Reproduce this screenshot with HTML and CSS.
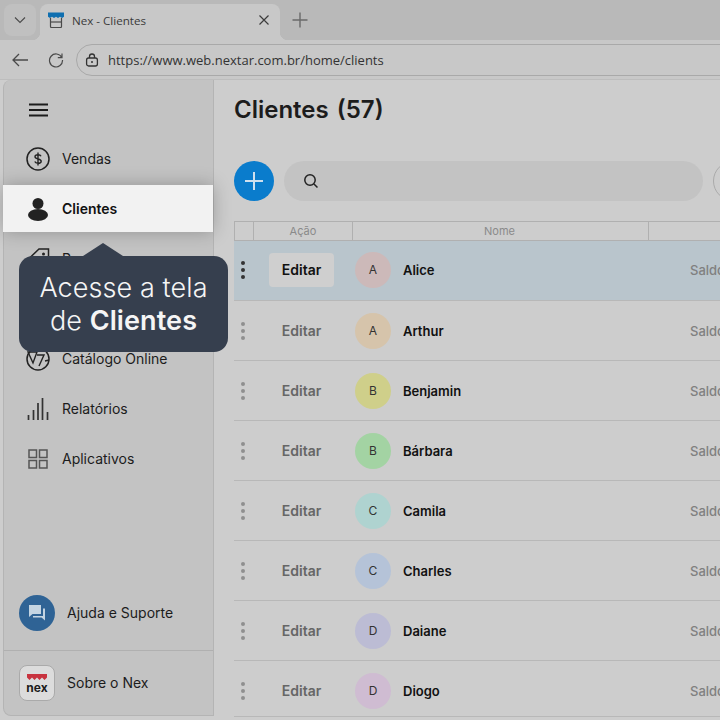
FILE: index.html
```html
<!DOCTYPE html>
<html lang="en">
<head>
    <meta charset="UTF-8">
    <title>Nex - Clientes</title>
    <link rel="stylesheet" href="styles.css">
</head>
<body>
    <div class="tabstrip">
        <div class="tab-list-button">
            <svg width="14" height="14" viewBox="0 0 14 14"><path d="M2 4.500l5 5 5-5" fill="none" stroke="#4a4a4a" stroke-width="1.100"/></svg>
        </div>
        <div class="tab">
            <svg class="favicon" width="16" height="16" viewBox="0 0 16 16">
                <path d="M2.500 6v8.500a1 1 0 0 0 1 1h9a1 1 0 0 0 1-1V6" fill="none" stroke="#4a4a4a" stroke-width="1.200"/>
                <path d="M3 10h10" stroke="#4a4a4a" stroke-width="1.200"/>
                <path d="M0 0.500h16v4.200l-2 1.300-2-1.300-2 1.300-2-1.300-2 1.300-2-1.300-2 1.300-2-1.300z" fill="#0f6fb0"/>
            </svg>
            <span class="tab-title">Nex - Clientes</span>
            <svg class="tab-close" width="12" height="12" viewBox="0 0 12 12"><path d="M1.500 1.500l9 9M10.500 1.500l-9 9" stroke="#3c3c3c" stroke-width="1.200"/></svg>
        </div>
        <svg class="new-tab" width="16" height="16" viewBox="0 0 16 16"><path d="M8 0.500v15M0.500 8h15" stroke="#6a6a6a" stroke-width="1.400"/></svg>
    </div>

    <div class="toolbar">
        <svg width="18" height="16" viewBox="0 0 18 16"><path d="M17 8H2M8 2L2 8l6 6" fill="none" stroke="#4a4a4a" stroke-width="1.300"/></svg>
        <svg width="16" height="16" viewBox="0 0 16 16"><path d="M13.800 5.500A6.500 6.500 0 1 0 14.500 8M14 1.500v4.200H9.800" fill="none" stroke="#4a4a4a" stroke-width="1.200"/></svg>
        <div class="address">
            <svg width="14" height="14" viewBox="0 0 14 14"><rect x="1.600" y="5" width="10.800" height="8" rx="2" fill="none" stroke="#333" stroke-width="1.300"/><path d="M4.500 5V3.500a2.500 2.500 0 0 1 5 0V5" fill="none" stroke="#333" stroke-width="1.300"/><circle cx="7" cy="9" r="1" fill="#333"/></svg>
            <span class="url">https://www.web.nextar.com.br/home/clients</span>
        </div>
    </div>

    <div class="app">
        <aside class="sidebar">
            <div class="menu-button">
                <svg width="20" height="14" viewBox="0 0 20 14"><path d="M0 1.500h19M0 7h19M0 12.500h19" stroke="#1c1c1c" stroke-width="2"/></svg>
            </div>
            <nav class="nav">
                <a class="nav-item">
                    <svg class="nav-icon" width="24" height="24" viewBox="0 0 24 24"><circle cx="12" cy="12" r="11" fill="none" stroke="#222" stroke-width="1.500"/><path d="M15 9.300c-.4-1-1.500-1.600-3-1.600-1.700 0-3 .8-3 2.100 0 2.800 6.200 1.500 6.200 4.400 0 1.400-1.400 2.100-3.200 2.100-1.600 0-2.800-.6-3.200-1.700M12 5.500v13" fill="none" stroke="#222" stroke-width="1.400"/></svg>
                    <span>Vendas</span>
                </a>
                <a class="nav-item active">
                    <svg class="nav-icon" width="24" height="24" viewBox="0 0 24 24"><circle cx="12" cy="6.500" r="5.500" fill="#222"/><ellipse cx="12" cy="18" rx="10" ry="6" fill="#222"/></svg>
                    <span>Clientes</span>
                </a>
                <a class="nav-item">
                    <svg class="nav-icon" width="24" height="24" viewBox="0 0 24 24"><path d="M1.500 13L13 2h9.500v9.500L11 23z" fill="none" stroke="#222" stroke-width="1.500"/><circle cx="17.500" cy="7" r="1.500" fill="#222"/></svg>
                    <span>Produtos</span>
                </a>
                <a class="nav-item">
                    <svg class="nav-icon" width="24" height="24" viewBox="0 0 24 24"><rect x="2" y="6" width="20" height="16" fill="none" stroke="#222" stroke-width="1.500"/></svg>
                    <span>Estoque</span>
                </a>
                <a class="nav-item">
                    <svg class="nav-icon" width="24" height="24" viewBox="0 0 24 24"><circle cx="12" cy="12" r="11" fill="none" stroke="#222" stroke-width="1.500"/><path d="M2 5h9L7 16zM11 8h7l-5 11M19 14l4-1" fill="none" stroke="#222" stroke-width="1.400"/></svg>
                    <span>Catálogo Online</span>
                </a>
                <a class="nav-item">
                    <svg class="nav-icon" width="24" height="24" viewBox="0 0 24 24"><path d="M2.500 23v-5M7.500 23V13M12 23V6M16.500 23V1M21.500 23v-8" fill="none" stroke="#333" stroke-width="1.700"/></svg>
                    <span>Relatórios</span>
                </a>
                <a class="nav-item">
                    <svg class="nav-icon" width="24" height="24" viewBox="0 0 24 24"><path d="M3 3h7.500v7.500H3zM13.500 3H21v7.500h-7.500zM3 13.500h7.500V21H3zM13.500 13.500H21V21h-7.500z" fill="none" stroke="#555" stroke-width="1.500"/></svg>
                    <span>Aplicativos</span>
                </a>
            </nav>
            <div class="help">
                <div class="help-icon">
                    <svg width="20" height="20" viewBox="0 0 20 20"><path d="M2 2h12v9H5.500L2 14z" fill="#c4d4e2"/><path d="M16 5.500h2v12l-3.500-3H6V13h10z" fill="#c4d4e2"/></svg>
                </div>
                <span>Ajuda e Suporte</span>
            </div>
            <div class="about">
                <div class="about-logo">
                    <svg width="20" height="7" viewBox="0 0 20 7"><path d="M0 0h20v3.500l-2.500 2.500-2.500-2.500-2.500 2.500-2.500-2.500-2.500 2.500L5 3.500 2.500 6 0 3.500z" fill="#c8333f"/></svg>
                    <span class="logo-text">nex</span>
                </div>
                <span class="about-label">Sobre o Nex</span>
            </div>
        </aside>

        <main class="main">
            <h1 class="page-title">Clientes (57)</h1>
            <div class="actions">
                <button class="add-button">
                    <svg width="20" height="20" viewBox="0 0 20 20"><path d="M10 1v18M1 10h18" stroke="#cfe0ee" stroke-width="2"/></svg>
                </button>
                <div class="search">
                    <svg width="16" height="16" viewBox="0 0 16 16"><circle cx="7" cy="7" r="5.200" fill="none" stroke="#222" stroke-width="1.500"/><path d="M11 11l3.500 3.500" stroke="#222" stroke-width="1.500"/></svg>
                </div>
                <div class="filter-button"></div>
            </div>

            <div class="table">
                <div class="table-head">
                    <div class="col-menu"></div>
                    <div class="col-action">Ação</div>
                    <div class="col-name">Nome</div>
                    <div class="col-debit">Débito</div>
                </div>
                <div class="row selected">
                    <div class="col-menu"><i></i><i></i><i></i></div>
                    <div class="col-action"><span class="edit">Editar</span></div>
                    <div class="col-name"><span class="avatar a1">A</span><b>Alice</b></div>
                    <div class="col-debit">Saldo</div>
                </div>
                <div class="row">
                    <div class="col-menu"><i></i><i></i><i></i></div>
                    <div class="col-action"><span class="edit">Editar</span></div>
                    <div class="col-name"><span class="avatar a2">A</span><b>Arthur</b></div>
                    <div class="col-debit">Saldo</div>
                </div>
                <div class="row">
                    <div class="col-menu"><i></i><i></i><i></i></div>
                    <div class="col-action"><span class="edit">Editar</span></div>
                    <div class="col-name"><span class="avatar a3">B</span><b>Benjamin</b></div>
                    <div class="col-debit">Saldo</div>
                </div>
                <div class="row">
                    <div class="col-menu"><i></i><i></i><i></i></div>
                    <div class="col-action"><span class="edit">Editar</span></div>
                    <div class="col-name"><span class="avatar a4">B</span><b>Bárbara</b></div>
                    <div class="col-debit">Saldo</div>
                </div>
                <div class="row">
                    <div class="col-menu"><i></i><i></i><i></i></div>
                    <div class="col-action"><span class="edit">Editar</span></div>
                    <div class="col-name"><span class="avatar a5">C</span><b>Camila</b></div>
                    <div class="col-debit">Saldo</div>
                </div>
                <div class="row">
                    <div class="col-menu"><i></i><i></i><i></i></div>
                    <div class="col-action"><span class="edit">Editar</span></div>
                    <div class="col-name"><span class="avatar a6">C</span><b>Charles</b></div>
                    <div class="col-debit">Saldo</div>
                </div>
                <div class="row">
                    <div class="col-menu"><i></i><i></i><i></i></div>
                    <div class="col-action"><span class="edit">Editar</span></div>
                    <div class="col-name"><span class="avatar a7">D</span><b>Daiane</b></div>
                    <div class="col-debit">Saldo</div>
                </div>
                <div class="row">
                    <div class="col-menu"><i></i><i></i><i></i></div>
                    <div class="col-action"><span class="edit">Editar</span></div>
                    <div class="col-name"><span class="avatar a8">D</span><b>Diogo</b></div>
                    <div class="col-debit">Saldo</div>
                </div>
            </div>
        </main>
    </div>

    <div class="tooltip">Acesse a tela<br>de <b>Clientes</b></div>
</body>
</html>
```

FILE: styles.css
```css
html, body {
    margin: 0;
    height: 720px;
    overflow: hidden;
}

body {
    background: #cdcdcd;
    font-family: 'Inter', 'Liberation Sans', sans-serif;
    color: #1c1c1c;
    position: relative;
}

/* browser chrome */
.tabstrip {
    height: 40px;
    background: #b9b9b9;
    display: flex;
    align-items: flex-end;
    padding-left: 4px;
    box-sizing: border-box;
}

.tab-list-button {
    width: 32px;
    height: 32px;
    margin-bottom: 4px;
    background: #c0c0c0;
    border-radius: 8px;
    display: flex;
    align-items: center;
    justify-content: center;
}

.tab {
    width: 240px;
    height: 36px;
    margin-left: 4px;
    background: #c8c8c8;
    border-radius: 8px 8px 0 0;
    display: flex;
    align-items: center;
    padding: 0 10px 4px 8px;
    box-sizing: border-box;
    position: relative;
}

/* the little curved feet on the active tab */
.tab::before,
.tab::after {
    content: "";
    position: absolute;
    bottom: 0;
    width: 8px;
    height: 8px;
}

.tab::before {
    left: -8px;
    background: radial-gradient(circle at 0 0, transparent 8px, #c8c8c8 8.5px);
}

.tab::after {
    right: -8px;
    background: radial-gradient(circle at 100% 0, transparent 8px, #c8c8c8 8.5px);
}

.favicon {
    flex: none;
}

.tab-title {
    margin-left: 8px;
    font-family: 'Open Sans', 'Noto Sans', sans-serif;
    font-size: 11.6px;
    color: #3a3a3a;
    flex: 1;
}

.new-tab {
    margin: 0 0 12px 12px;
}

.toolbar {
    height: 39px;
    background: #c8c8c8;
    display: flex;
    align-items: center;
    padding: 1px 0 0 11px;
    box-sizing: border-box;
}

.toolbar svg {
    flex: none;
}

.toolbar > svg:nth-child(2) {
    margin-left: 19px;
}

.address {
    flex: none;
    width: 700px;
    height: 32px;
    margin-left: 12px;
    border: 1px solid #a9a9a9;
    border-radius: 16px;
    display: flex;
    align-items: center;
    padding-left: 8px;
    box-sizing: border-box;
}

.url {
    margin-left: 9px;
    font-family: 'Open Sans', 'Noto Sans', sans-serif;
    font-size: 13px;
    color: #333;
    white-space: nowrap;
}

/* app */
.app {
    height: 641px;
    display: flex;
    border-top: 1px solid #bdbdbd;
    box-sizing: border-box;
}

.sidebar {
    width: 211px;
    height: 636px;
    margin-left: 3px;
    flex: none;
    background: #c3c3c3;
    border: 1px solid #b4b4b4;
    border-top: 0;
    border-radius: 8px 0 0 8px;
    box-sizing: border-box;
    display: flex;
    flex-direction: column;
    font-size: 14px;
}

.menu-button {
    height: 54px;
    display: flex;
    align-items: center;
    padding: 5px 0 0 25px;
    box-sizing: border-box;
}

.nav-item {
    height: 50px;
    display: flex;
    align-items: center;
    padding-left: 22px;
    gap: 12px;
}

.nav-item span {
    margin-bottom: 1px;
}

.nav-item.active {
    height: 47px;
    margin: 1px 0 2px -1px;
    padding-left: 23px;
    background: #f2f2f2;
    box-shadow: 0 0 18px rgba(0, 0, 0, 0.25);
    font-weight: 600;
    position: relative;
    color: #111;
}

.nav-item.active span {
    margin-bottom: 0;
}

.nav-icon {
    flex: none;
}

.help {
    margin-top: auto;
    height: 70px;
    display: flex;
    align-items: center;
    padding: 0 0 6px 15px;
    box-sizing: border-box;
    gap: 12px;
    border-bottom: 1px solid #b0b0b0;
}

.help-icon {
    width: 36px;
    height: 36px;
    border-radius: 50%;
    background: #2f6395;
    display: flex;
    align-items: center;
    justify-content: center;
}

.about {
    height: 64px;
    display: flex;
    align-items: center;
    padding-left: 15px;
    gap: 12px;
}

.about-label {
    margin-bottom: 1px;
}

.about-logo {
    width: 36px;
    height: 36px;
    box-sizing: border-box;
    border: 1px solid #aaa;
    border-radius: 8px;
    background: #dcdcdc;
    display: flex;
    flex-direction: column;
    align-items: center;
    padding-top: 8px;
}

.logo-text {
    font-size: 12px;
    font-weight: 700;
    line-height: 12px;
    margin-top: 1px;
    color: #1c1c1c;
}

.main {
    flex: 1;
    min-width: 0;
    overflow: hidden;
    padding-left: 20px;
}

.page-title {
    margin: 15px 0 0;
    height: 30px;
    font-size: 24px;
    line-height: 30px;
    font-weight: 600;
    word-spacing: 2px;
    white-space: nowrap;
}

.actions {
    display: flex;
    margin-top: 36px;
    width: 520px;
    gap: 10px;
}

.add-button {
    flex: none;
    width: 40px;
    height: 40px;
    padding: 0;
    border: 0;
    border-radius: 50%;
    background: #0a7ccc;
    display: flex;
    align-items: center;
    justify-content: center;
}

.search {
    flex: none;
    width: 419px;
    height: 40px;
    border-radius: 20px;
    background: #c3c3c3;
    display: flex;
    align-items: center;
    padding-left: 19px;
    box-sizing: border-box;
}

.filter-button {
    flex: none;
    width: 40px;
    height: 40px;
    box-sizing: border-box;
    border: 1px solid #aaa;
    border-radius: 50%;
}

.table {
    margin-top: 20px;
    width: 600px;
    height: 496px;
    overflow: hidden;
    border-bottom: 1px solid #b8b8b8;
    box-sizing: border-box;
}

.table-head {
    display: flex;
    height: 20px;
    box-sizing: border-box;
    border: 1px solid #b0b0b0;
    border-width: 1px 0 1px 1px;
    font-size: 11px;
    line-height: 18px;
    color: #8a8a8a;
    text-align: center;
}

.table-head > div {
    border-right: 1px solid #b0b0b0;
    box-sizing: border-box;
}

.table-head .col-name {
    padding-right: 2px;
}

.col-menu {
    width: 19px;
    flex: none;
}

.col-action {
    width: 99px;
    flex: none;
}

.col-name {
    width: 296px;
    flex: none;
}

.col-debit {
    flex: 1;
}

.row {
    display: flex;
    height: 60px;
    box-sizing: border-box;
    align-items: center;
    border-bottom: 1px solid #b8b8b8;
}

.row.selected {
    background: #b9c5cc;
    padding-bottom: 1px;
}

.row .col-menu {
    display: flex;
    flex-direction: column;
    align-items: center;
    gap: 3px;
    padding-right: 2px;
    box-sizing: border-box;
}

.row .col-menu i {
    width: 4px;
    height: 4px;
    border-radius: 50%;
    background: #8f8f8f;
}

.row.selected .col-menu i {
    background: #333;
}

.row .col-action {
    display: flex;
    justify-content: center;
    padding-right: 2px;
    box-sizing: border-box;
}

.edit {
    width: 65px;
    height: 34px;
    line-height: 34px;
    border-radius: 4px;
    font-size: 14px;
    font-weight: 600;
    text-align: center;
    color: #666;
}

.selected .edit {
    background: #cfcfcf;
    color: #111;
}

.row .col-name {
    display: flex;
    align-items: center;
    padding-left: 3px;
    box-sizing: border-box;
    font-size: 13px;
}

.row .col-name b {
    font-weight: 600;
    color: #111;
}

.avatar {
    width: 36px;
    height: 36px;
    border-radius: 50%;
    margin-right: 12px;
    font-size: 12px;
    line-height: 36px;
    text-align: center;
    color: #333;
}

.a1 { background: #ccb9b9; }
.a2 { background: #d6c4ab; }
.a3 { background: #cfcf8a; }
.a4 { background: #a3d3a3; }
.a5 { background: #afd3d0; }
.a6 { background: #b5c3d8; }
.a7 { background: #bcbcd4; }
.a8 { background: #cfbcd2; }

.row .col-debit {
    padding-left: 42px;
    font-size: 13px;
    font-weight: 500;
    color: #808080;
}

/* tour tooltip */
.tooltip {
    position: absolute;
    left: 19px;
    top: 256px;
    width: 209px;
    height: 96px;
    background: #363f4e;
    border-radius: 14px;
    color: #f5f5f5;
    font-size: 27px;
    font-weight: 300;
    letter-spacing: 0.1px;
    line-height: 33px;
    text-align: center;
    padding-top: 15px;
    box-sizing: border-box;
}

.tooltip b {
    font-weight: 600;
}

.tooltip::before {
    content: "";
    position: absolute;
    left: 64px;
    top: -13px;
    border-left: 20px solid transparent;
    border-right: 20px solid transparent;
    border-bottom: 13px solid #363f4e;
}
```
